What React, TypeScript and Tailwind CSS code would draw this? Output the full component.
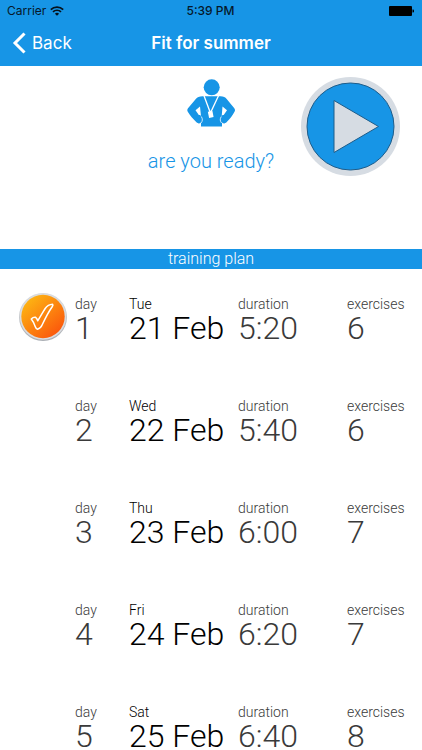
interface TrainingDay {
  day: number;
  weekday: string;
  date: string;
  duration: string;
  exercises: number;
  done: boolean;
}

const trainingDays: TrainingDay[] = [
  { day: 1, weekday: "Tue", date: "21 Feb", duration: "5:20", exercises: 6, done: true },
  { day: 2, weekday: "Wed", date: "22 Feb", duration: "5:40", exercises: 6, done: false },
  { day: 3, weekday: "Thu", date: "23 Feb", duration: "6:00", exercises: 7, done: false },
  { day: 4, weekday: "Fri", date: "24 Feb", duration: "6:20", exercises: 7, done: false },
  { day: 5, weekday: "Sat", date: "25 Feb", duration: "6:40", exercises: 8, done: false },
];

function StatusBar() {
  return (
    <div className="grid h-5 grid-cols-3 items-center pt-0.5 pl-[7px] pr-2 text-[12px] leading-4 text-[#06182a]">
      <div className="flex items-center gap-1">
        <span>Carrier</span>
        <svg className="h-[10px] w-[14px]" viewBox="0 0 14 10" fill="none" stroke="#06121c" strokeWidth="1.7" aria-hidden="true">
          <path d="M0.8 3.6a8.8 8.8 0 0 1 12.4 0" />
          <path d="M3 5.9a5.7 5.7 0 0 1 8 0" />
          <path d="M7 9.8 4.9 7.7a3 3 0 0 1 4.2 0z" fill="#06121c" stroke="none" />
        </svg>
      </div>
      <span className="text-center font-medium">5:39 PM</span>
      <svg className="h-[10px] w-[25px] justify-self-end" viewBox="0 0 25 10" aria-hidden="true">
        <rect x="0" y="0" width="23" height="10" rx="1" fill="#000" />
        <path d="M23.5 3.5h.5a1 1 0 0 1 1 1v1a1 1 0 0 1-1 1h-.5z" fill="#000" />
      </svg>
    </div>
  );
}

function NavBar() {
  return (
    <div className="grid h-[46px] grid-cols-[1fr_auto_1fr] items-center px-3 text-white">
      <button type="button" className="flex items-center gap-1.5 justify-self-start text-[17px] leading-6">
        <svg className="h-[22px] w-[14px]" viewBox="0 0 14 22" fill="none" stroke="currentColor" strokeWidth="3" aria-hidden="true">
          <path d="M12.5 1.5 3 11l9.5 9.5" />
        </svg>
        Back
      </button>
      <h1 className="text-[17px] leading-6 font-semibold">Fit for summer</h1>
    </div>
  );
}

function CoachIcon() {
  return (
    <svg className="h-12 w-12" viewBox="0 0 48 48" aria-hidden="true">
      <circle cx="24.7" cy="8.3" r="8" fill="#1795e6" />
      <path
        d="M15.5 17.3h18c3 0 4.800.8 6.200 2.800l7.600 9.200c.9 1.200.9 2.300.2 3.500-2 3.700-4.500 7.200-8.200 10.800-1.200 1.200-3.300 1-4.300-.2V47.500H14V43.400c-1 1.200-3.100 1.400-4.300.2C6 40 3 36.500.8 32.800c-.7-1.200-.7-2.300.2-3.500l7.800-9.200c1.500-2 3.500-2.800 6.700-2.800z"
        fill="#1795e6"
      />
      <path d="M13 27.500 8.500 31.200l3.300 4.800c1.100-.2 1.800.4 2.200 1.200z" fill="#fff" />
      <path d="m35.500 27.500 4.500 3.700-3.300 4.800c-1.100-.2-1.600.4-2 1.200z" fill="#fff" />
      <path d="m17 16.800 5.800 15.500h1.400l7.300-15.500" fill="none" stroke="#fff" strokeWidth="1.3" />
      <path d="m20.800 32.800 4.600-.9 1.200 6.200-4.500.9z" fill="#fff" />
      <path d="M14.300 37.500c1.500 2.500 1.400 4.500-.3 6.500M34.300 37.500c-1.500 2.500-1.400 4.500.3 6.500" fill="none" stroke="#fff" strokeWidth="0.8" />
    </svg>
  );
}

function PlayIcon() {
  return (
    <svg className="h-[99px] w-[99px]" viewBox="0 0 99 99" aria-hidden="true">
      <circle cx="49.5" cy="49.5" r="49.5" fill="#d6dce3" />
      <circle cx="49.5" cy="49.5" r="43.5" fill="#1795e6" stroke="#1d5c8a" />
      <path d="M33 23.5v52l44.500-26z" fill="#d6dce3" stroke="#1d5c8a" strokeLinejoin="round" />
    </svg>
  );
}

function DoneBadge() {
  return (
    <svg className="h-[50px] w-[50px]" viewBox="0 0 50 50" role="img" aria-label="done">
      <defs>
        <linearGradient id="badge-fill" x1="0.1" y1="0.1" x2="0.8" y2="0.9">
          <stop offset="0" stopColor="#fdb713" />
          <stop offset="1" stopColor="#fb5a0c" />
        </linearGradient>
        <linearGradient id="badge-rim" x1="0" y1="0" x2="0" y2="1">
          <stop offset="0" stopColor="#dcdee0" />
          <stop offset="1" stopColor="#a9adb3" />
        </linearGradient>
      </defs>
      <circle cx="25" cy="25" r="24" fill="url(#badge-rim)" />
      <circle cx="25" cy="24.5" r="23.2" fill="#dadcdf" />
      <circle cx="25" cy="24.5" r="21.7" fill="url(#badge-fill)" />
      <path
        d="M13.3 27c1.200-1.300 2.600-1.900 4.300-1.700 1.200.8 1.700 2 2.100 3.500 3-4.500 5-8.500 7.500-12.300 1.800-2.700 4-4 7.500-4.200.5.800.2 1.500-.5 2.500-4 5.500-7 11.700-10 18-1 2.300-2.400 4-4.700 4.500-1.200-.3-1.800-1.300-2.200-2.500-.9-2.800-2-5.300-4-7.800z"
        fill="none"
        stroke="#fff"
        strokeWidth="1.5"
        strokeLinejoin="round"
      />
    </svg>
  );
}

interface FieldProps {
  label: string;
  value: string | number;
  strong?: boolean;
}

function Field({ label, value, strong }: FieldProps) {
  return (
    <div className={strong ? "text-black" : "text-[#3a3a3a]"}>
      <div className="text-[14px] leading-4">{label}</div>
      <div className="text-[32px] leading-8 whitespace-nowrap">{value}</div>
    </div>
  );
}

function TrainingRow({ item }: { item: TrainingDay }) {
  return (
    <li className="flex h-[102px] shrink-0 items-start pt-[23px]">
      <div className="w-[75px] shrink-0 pl-[18px]">{item.done && <DoneBadge />}</div>
      <div className="grid flex-1 grid-cols-[54fr_109fr_109fr_75fr] pt-1">
        <Field label="day" value={item.day} />
        <Field label={item.weekday} value={item.date} strong />
        <Field label="duration" value={item.duration} />
        <Field label="exercises" value={item.exercises} />
      </div>
    </li>
  );
}

export default function App() {
  return (
    <div className="flex h-screen flex-col overflow-hidden bg-white font-['Roboto','Liberation_Sans',sans-serif] font-light">
      <header className="shrink-0 bg-[#1795e6] font-['Inter','Liberation_Sans',sans-serif] font-normal">
        <StatusBar />
        <NavBar />
      </header>

      <section className="grid h-[183px] shrink-0 grid-cols-[1fr_auto_1fr] items-start px-[22px] pt-[11px]">
        <div className="col-start-2 flex flex-col items-center gap-5 pt-0.5">
          <CoachIcon />
          <p className="text-[20px] leading-7 text-[#1795e6]">are you ready?</p>
        </div>
        <button type="button" aria-label="Start training" className="justify-self-end rounded-full">
          <PlayIcon />
        </button>
      </section>

      <h2 className="shrink-0 bg-[#1795e6] text-center text-[16px] leading-5 text-white">training plan</h2>

      <ul className="flex min-h-0 flex-1 flex-col overflow-hidden">
        {trainingDays.map((item) => (
          <TrainingRow key={item.day} item={item} />
        ))}
      </ul>
    </div>
  );
}
